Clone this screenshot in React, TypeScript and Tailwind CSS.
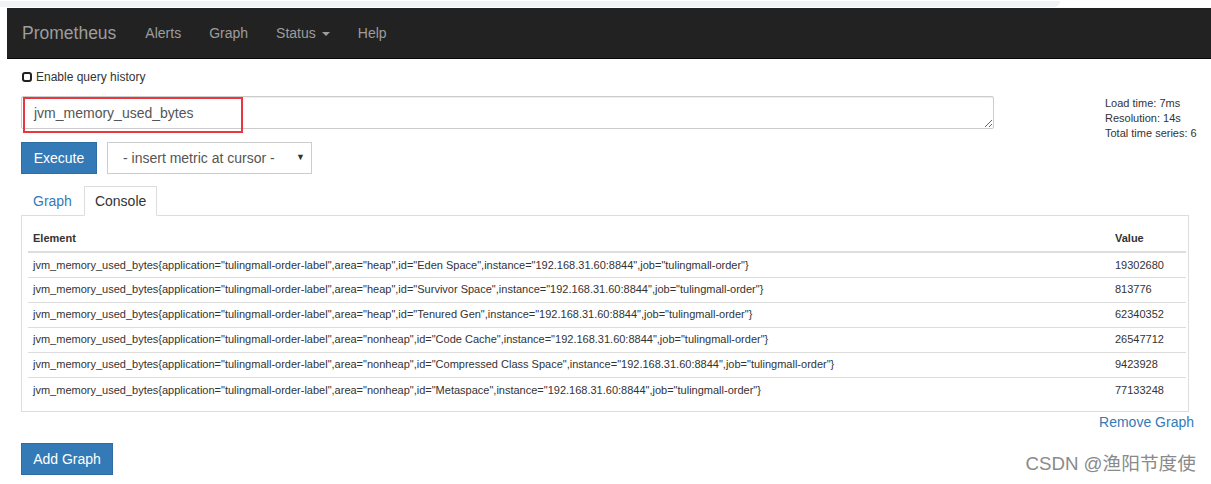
import React from "react"

const ROWS: { id: string; area: string; value: string }[] = [
    { id: "Eden Space", area: "heap", value: "19302680" },
    { id: "Survivor Space", area: "heap", value: "813776" },
    { id: "Tenured Gen", area: "heap", value: "62340352" },
    { id: "Code Cache", area: "nonheap", value: "26547712" },
    { id: "Compressed Class Space", area: "nonheap", value: "9423928" },
    { id: "Metaspace", area: "nonheap", value: "77133248" },
]

function NavLink({ label, caret }: { label: string; caret?: boolean }) {
    return (
        <a className="px-[14px] text-[14px] text-[#9d9d9d] flex items-center gap-[6px]">
            {label}
            {caret && (
                <span className="inline-block w-0 h-0 border-x-[4px] border-x-transparent border-t-[4px] border-t-[#9d9d9d] mt-[1px]"></span>
            )}
        </a>
    )
}

export default function App() {
    return (
        <div className="w-[1211px] h-[484px] bg-white overflow-hidden text-[#333]" style={{ fontFamily: '"Liberation Sans", Arial, sans-serif' }}>
            {/* browser strip */}
            <div className="h-[8px] pt-[1px]">
                <div className="h-[6px] w-[1060px] bg-[#f0f2f4] rounded-br-[6px]"></div>
            </div>

            {/* navbar */}
            <nav className="ml-[7px] h-[51px] pt-[1px] bg-[#222] border-b border-[#080808] flex items-center">
                <span className="pl-[15px] pr-[15px] text-[17.5px] text-[#9d9d9d]">Prometheus</span>
                <NavLink label="Alerts" />
                <NavLink label="Graph" />
                <NavLink label="Status" caret />
                <NavLink label="Help" />
            </nav>

            <div className="pl-[21px] pr-[17px]">
                {/* query history */}
                <div className="flex items-center gap-[4px] mt-[12px] h-[12px] text-[12px] pl-[1px]">
                    <span className="w-[10px] h-[10px] border-2 border-[#222] rounded-[3px]"></span>
                    <span>Enable query history</span>
                </div>

                <div className="flex mt-[13px]">
                    <div className="w-[973px] shrink-0">
                        {/* expression input */}
                        <div className="relative">
                            <textarea
                                defaultValue="jvm_memory_used_bytes"
                                className="block w-[973px] h-[33px] border border-[#ccc] rounded-[2px] px-[12px] py-[6px] text-[14px] leading-[20px] text-[#555] outline-none shadow-[inset_0_1px_1px_rgba(0,0,0,0.075)]"
                                style={{ fontFamily: '"Liberation Sans", Arial, sans-serif' }}
                            />
                            <div className="absolute left-[2px] top-[1px] w-[220px] h-[36px] border-2 border-[#e8383d]"></div>
                        </div>

                        {/* controls */}
                        <div className="flex gap-[10px] mt-[13px]">
                            <button className="w-[76px] h-[32px] bg-[#337ab7] border border-[#2e6da4] text-white text-[14px]">Execute</button>
                            <div className="w-[205px] h-[32px] border border-[#ccc] flex items-center pl-[15px] pr-[6px] text-[14px] text-[#555]">
                                <span className="flex-1">- insert metric at cursor -</span>
                                <span className="text-[9px] text-[#333]">▼</span>
                            </div>
                        </div>
                    </div>

                    <div className="ml-[111px] text-[11px] leading-[15px] whitespace-nowrap">
                        <div>Load time: 7ms</div>
                        <div>Resolution: 14s</div>
                        <div>Total time series: 6</div>
                    </div>
                </div>

                {/* tabs */}
                <div className="flex mt-[12px] w-[1168px] text-[14px]">
                    <span className="pl-[12px] pr-[10px] h-[29px] flex items-center pt-[2px] text-[#337ab7]">Graph</span>
                    <span className="ml-[2px] px-[10px] h-[30px] flex items-center border border-[#ddd] border-b-white bg-white -mb-px relative z-10">Console</span>
                </div>

                <div className="w-[1168px] border border-[#ddd] pt-[10px] pb-[9px] pl-[6px] pr-[2px]">
                    <table className="w-full text-[11px] border-collapse">
                        <thead>
                            <tr className="h-[26px] border-b-2 border-[#ddd]">
                                <th className="text-left font-bold pl-[5px]">Element</th>
                                <th className="text-left font-bold w-[71px]">Value</th>
                            </tr>
                        </thead>
                        <tbody>
                            {ROWS.map((r, i) => (
                                <tr key={r.id} className={i > 0 ? "h-[25px] border-t border-[#ddd]" : "h-[25px]"}>
                                    <td className="pl-[5px]">
                                        {`jvm_memory_used_bytes{application="tulingmall-order-label",area="${r.area}",id="${r.id}",instance="192.168.31.60:8844",job="tulingmall-order"}`}
                                    </td>
                                    <td>{r.value}</td>
                                </tr>
                            ))}
                        </tbody>
                    </table>
                </div>

                <div className="w-[1173px] text-right text-[14px] text-[#337ab7] leading-[20px]">Remove Graph</div>

                <div className="flex items-start justify-between w-[1175px] mt-[11px]">
                    <button className="w-[92px] h-[32px] bg-[#337ab7] border border-[#2e6da4] text-white text-[14px]">Add Graph</button>
                    <span
                        className="mt-[7px] text-[18.7px] text-[#8a8a8a]"
                        style={{ fontFamily: '"Liberation Sans", "Noto Sans CJK SC", sans-serif' }}
                    >
                        CSDN @渔阳节度使
                    </span>
                </div>
            </div>
        </div>
    )
}
